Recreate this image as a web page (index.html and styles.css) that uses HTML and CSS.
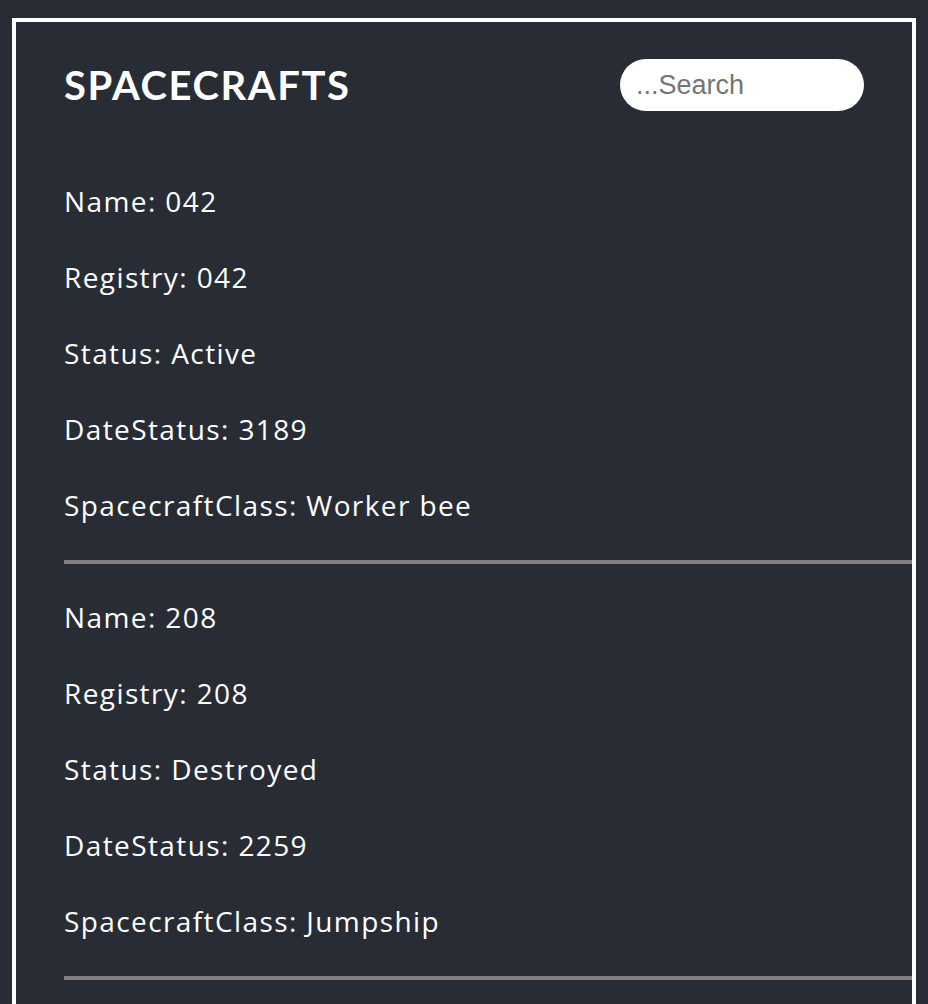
FILE: index.html
```html
<!DOCTYPE html>
<html lang="en">
<head>
<meta charset="utf-8">
<title>Spacecrafts</title>
<link rel="stylesheet" href="styles.css">
</head>
<body>
<div class="app">
  <header class="header">
    <h1 class="title">SPACECRAFTS</h1>
    <input class="search" type="text" placeholder="...Search">
  </header>
  <div class="list">
    <div class="item">
      <p class="field">Name: 042</p>
      <p class="field">Registry: 042</p>
      <p class="field">Status: Active</p>
      <p class="field">DateStatus: 3189</p>
      <p class="field">SpacecraftClass: Worker bee</p>
      <div class="divider"></div>
    </div>
    <div class="item">
      <p class="field">Name: 208</p>
      <p class="field">Registry: 208</p>
      <p class="field">Status: Destroyed</p>
      <p class="field">DateStatus: 2259</p>
      <p class="field">SpacecraftClass: Jumpship</p>
      <div class="divider"></div>
    </div>
  </div>
</div>
</body>
</html>
```
FILE: styles.css
```css
html, body {
  margin: 0;
  padding: 0;
  background: #282c34;
}
body {
  padding: 18px 12px 0;
  font-family: "Open Sans", Lato, sans-serif;
  color: #ffffff;
  overflow: hidden;
  height: 1004px;
  box-sizing: border-box;
}
.app {
  border: 4px solid #ffffff;
  min-height: 1200px;
}
.header {
  display: flex;
  justify-content: space-between;
  align-items: center;
  padding: 37px 48px 0;
  height: 52px;
}
.title {
  margin: 0;
  font-family: Lato, "Open Sans", sans-serif;
  font-size: 40px;
  font-weight: 700;
  letter-spacing: 1.6px;
  line-height: 52px;
}
.search {
  width: 244px;
  height: 52px;
  box-sizing: border-box;
  border: none;
  border-radius: 26px;
  padding: 0 16px;
  font-family: "Liberation Sans", Arial, sans-serif;
  font-size: 27px;
  background: #ffffff;
  outline: none;
}
.search::placeholder {
  color: #757575;
}
.list {
  display: flex;
  flex-direction: column;
  padding: 37px 0 0 48px;
}
.item {
  display: flex;
  flex-direction: column;
  gap: 28px;
  padding-top: 29px;
}
.field {
  margin: 0;
  font-size: 28px;
  letter-spacing: 1.4px;
  line-height: 48px;
}
.divider {
  height: 4px;
  background: #808080;
  margin-top: 3px;
}
```
